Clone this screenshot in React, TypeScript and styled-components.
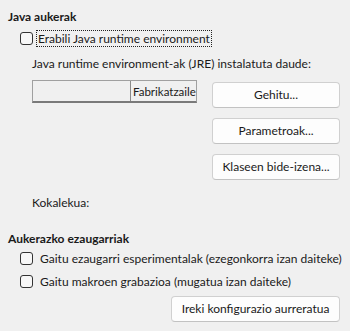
import React from "react";
import styled, { createGlobalStyle } from "styled-components";

const Global = createGlobalStyle`
  html, body { margin: 0; padding: 0; background: #f0f0f0; }
  body { font-family: "Lato", "Noto Sans", sans-serif; font-size: 12px; color: #1a1a1a; }
  * { box-sizing: border-box; }
`;

const Page = styled.div`
  width: 350px;
  height: 331px;
  padding: 9px 10px 0 8px;
  display: flex;
  flex-direction: column;
  white-space: nowrap;
`;

const Title = styled.div<{ $top?: number }>`
  font-weight: 700;
  line-height: 16px;
  height: 16px;
  margin-top: ${(p) => p.$top ?? 0}px;
`;

const Indent = styled.div<{ $top?: number }>`
  padding-left: 12px;
  margin-top: ${(p) => p.$top ?? 0}px;
  display: flex;
  flex-direction: column;
`;

const CheckRow = styled.label<{ $top?: number }>`
  display: inline-flex;
  align-items: center;
  height: 16px;
  margin-top: ${(p) => p.$top ?? 0}px;
  align-self: flex-start;
`;

const Box = styled.span`
  width: 13px;
  height: 13px;
  border: 1px solid #333;
  border-radius: 3px;
  background: #f7f7f7;
  flex: none;
`;

const LabelText = styled.span<{ $focus?: boolean }>`
  margin-left: ${(p) => (p.$focus ? 3 : 5)}px;
  padding: 0 1px;
  line-height: 15px;
  border: 1px dotted ${(p) => (p.$focus ? "#222" : "transparent")};
`;

const Sub = styled.div`
  padding-left: 12px;
  display: flex;
  flex-direction: column;
`;

const Text = styled.div<{ $top?: number }>`
  line-height: 16px;
  margin-top: ${(p) => p.$top ?? 0}px;
`;

const ListRow = styled.div`
  display: flex;
  margin-top: 8px;
  gap: 15px;
`;

const ListBox = styled.div`
  width: 165px;
  height: 23px;
  border-top: 1px solid #a0a0a0;
  border-left: 1px solid #a0a0a0;
  border-right: 1px solid #a0a0a0;
  border-bottom: 2px solid #7a7a7a;
  background: #f0f0f0;
  display: flex;
`;

const HeadCell = styled.div<{ $w: number }>`
  width: ${(p) => p.$w}px;
  flex: none;
  height: 20px;
  border-right: 1px solid #8a8a8a;
  display: flex;
  align-items: center;
  padding-left: 2px;
  font-size: 11.5px;
  &:last-child { border-right: none; }
`;

const ButtonCol = styled.div`
  display: flex;
  flex-direction: column;
  gap: 10px;
  margin-top: 2px;
`;

const Button = styled.button<{ $w?: number }>`
  width: ${(p) => p.$w ?? 128}px;
  height: 26px;
  background: #fdfdfd;
  border: 1px solid #d0d0d0;
  border-bottom-color: #c2c2c2;
  border-radius: 4px;
  font: inherit;
  color: #1a1a1a;
  padding: 0;
  line-height: 16px;
`;

const BottomRow = styled.div`
  display: flex;
  justify-content: flex-end;
  margin-top: 7px;
`;

export default function App() {
  return (
    <>
      <Global />
      <Page>
        <Title>Java aukerak</Title>
        <Indent $top={5}>
          <CheckRow>
            <Box />
            <LabelText $focus>Erabili Java runtime environment</LabelText>
          </CheckRow>
          <Sub>
            <Text $top={10}>Java runtime environment-ak (JRE) instalatuta daude:</Text>
            <ListRow>
              <ListBox>
                <HeadCell $w={98} />
                <HeadCell $w={65}>Fabrikatzaile</HeadCell>
              </ListBox>
              <ButtonCol>
                <Button>Gehitu...</Button>
                <Button>Parametroak...</Button>
                <Button>Klaseen bide-izena...</Button>
              </ButtonCol>
            </ListRow>
            <Text $top={15}>Kokalekua:</Text>
          </Sub>
        </Indent>
        <Title $top={20}>Aukerazko ezaugarriak</Title>
        <Indent $top={3}>
          <CheckRow>
            <Box />
            <LabelText>Gaitu ezaugarri esperimentalak (ezegonkorra izan daiteke)</LabelText>
          </CheckRow>
          <CheckRow $top={7}>
            <Box />
            <LabelText>Gaitu makroen grabazioa (mugatua izan daiteke)</LabelText>
          </CheckRow>
        </Indent>
        <BottomRow>
          <Button $w={169}>Ireki konfigurazio aurreratua</Button>
        </BottomRow>
      </Page>
    </>
  );
}
